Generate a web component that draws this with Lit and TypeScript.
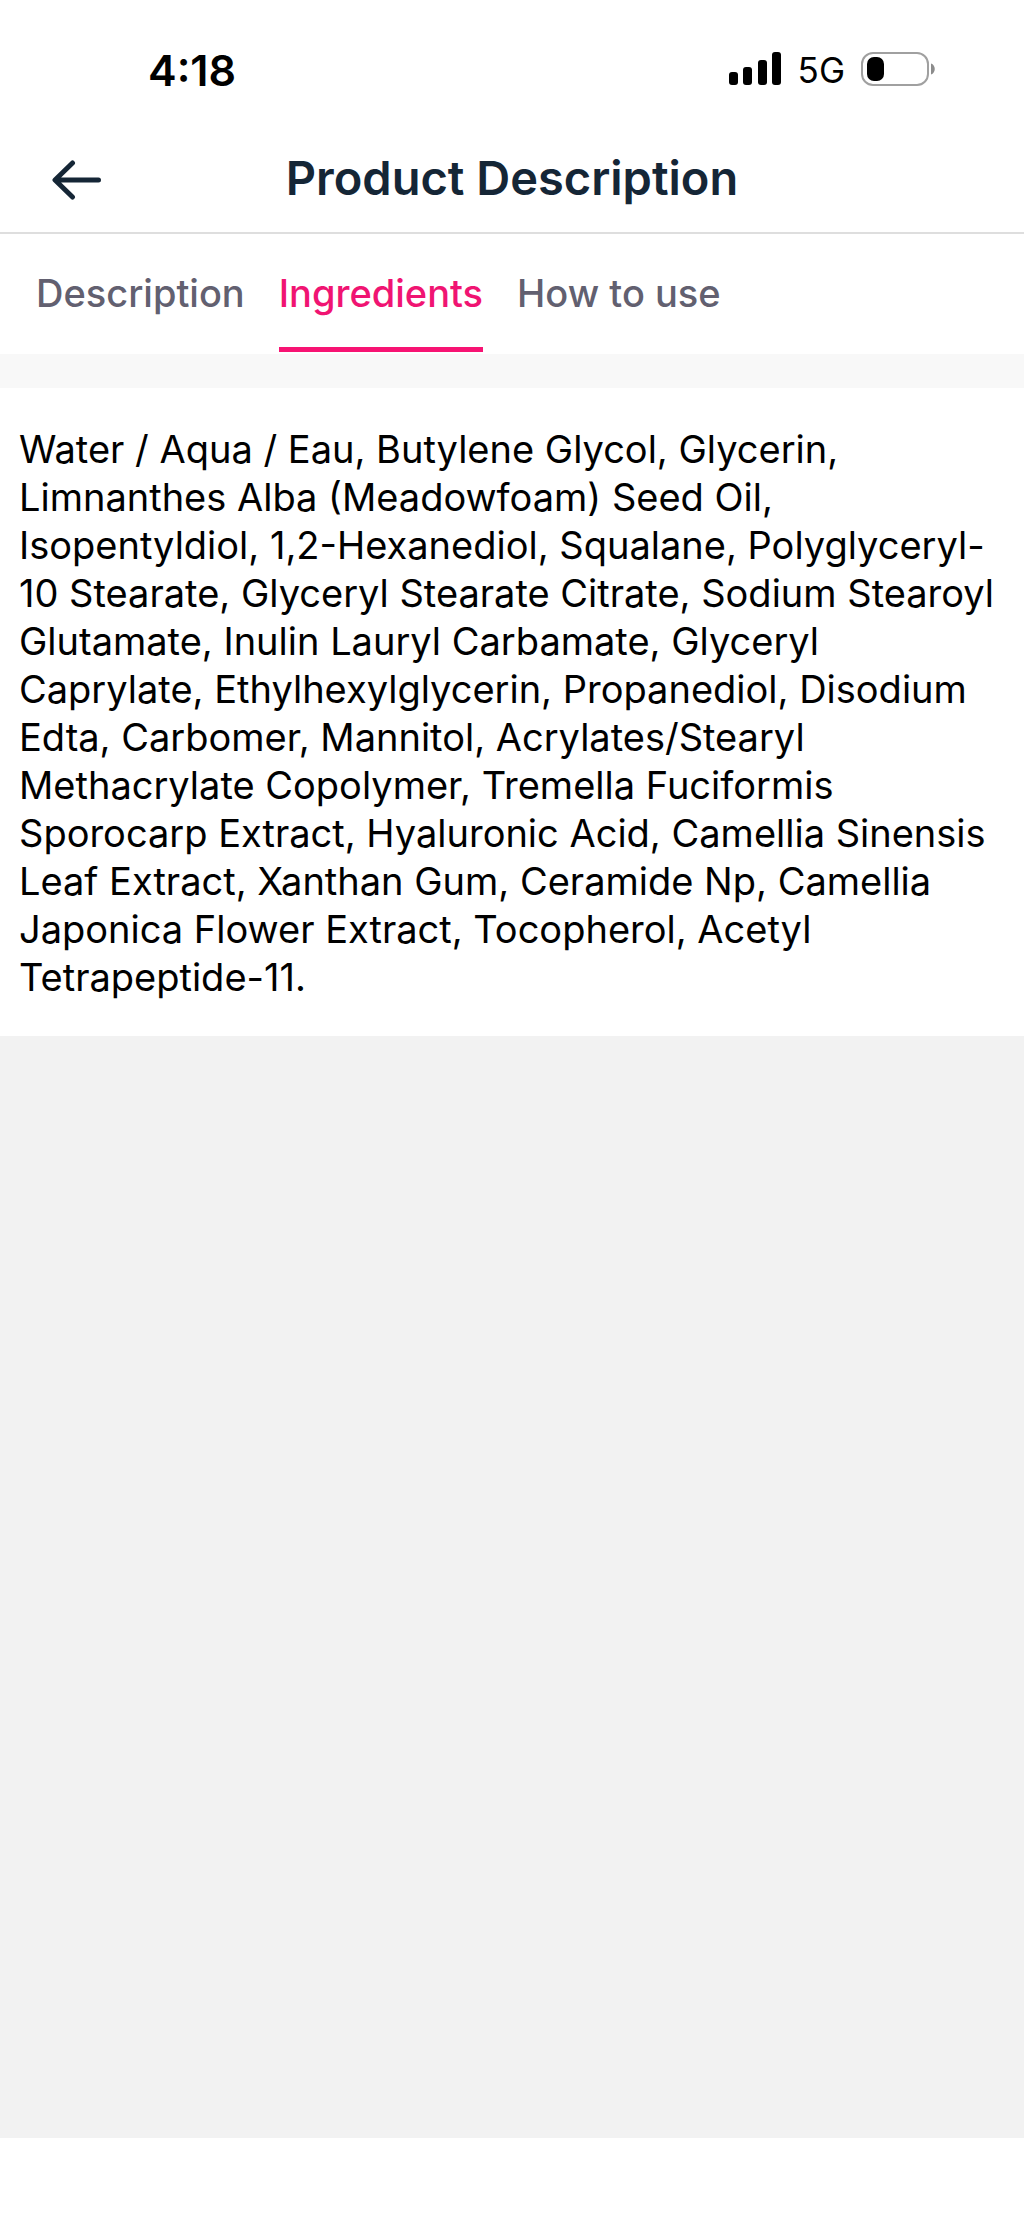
import { LitElement, html, css } from "lit";
import { customElement, state } from "lit/decorators.js";

const TABS = ["Description", "Ingredients", "How to use"];

@customElement("app-root")
export class AppRoot extends LitElement {
  static styles = css`
    :host {
      display: flex;
      flex-direction: column;
      min-height: 100vh;
      background: #f2f2f2;
      color: #000;
      font-family: Inter, "Liberation Sans", sans-serif;
    }
    .status {
      display: flex;
      align-items: center;
      justify-content: space-between;
      box-sizing: border-box;
      height: 124px;
      padding: 16px 87px 0 148px;
      background: #fff;
    }
    .time {
      font-size: 43px;
      font-weight: 600;
      line-height: 48px;
    }
    .indicators {
      display: flex;
      align-items: center;
      gap: 16px;
    }
    .network {
      font-size: 35px;
      font-weight: 400;
      line-height: 40px;
    }
    svg {
      display: block;
    }
    .header {
      display: grid;
      grid-template-columns: 104px 1fr 104px;
      align-items: center;
      height: 108px;
      background: #fff;
      border-bottom: 2px solid #dedede;
    }
    button {
      margin: 0;
      padding: 0;
      border: 0;
      background: none;
      font: inherit;
      color: inherit;
      cursor: pointer;
    }
    .back {
      justify-self: end;
      color: #152636;
    }
    h1 {
      margin: 0;
      font-size: 47px;
      font-weight: 600;
      line-height: 56px;
      text-align: center;
      color: #152636;
    }
    .tabs {
      display: flex;
      gap: 34px;
      padding: 0 36px 2px;
      background: #fff;
    }
    .tab {
      height: 118px;
      border-top: 5px solid transparent;
      border-bottom: 5px solid transparent;
      font-size: 38px;
      font-weight: 500;
      line-height: 48px;
      color: #626070;
    }
    .tab.active {
      color: #f01472;
      border-bottom-color: #f71373;
    }
    .panel {
      padding: 37px 19px 35px;
      background: #fff;
      border-top: 34px solid #f8f8f8;
    }
    p {
      margin: 0;
      font-size: 38px;
      line-height: 48px;
    }
    .safe-area {
      height: 81px;
      margin-top: auto;
      background: #fff;
    }
  `;

  @state() private active = 1;

  render() {
    return html`
      <div class="status">
        <span class="time">4:18</span>
        <div class="indicators">
          <svg width="54" height="36" viewBox="0 0 54 36" role="img" aria-label="Signal">
            <rect x="1" y="20" width="9" height="13" rx="3" />
            <rect x="15" y="15" width="9" height="18" rx="3" />
            <rect x="30" y="8" width="9" height="25" rx="3" />
            <rect x="44" y="0" width="9" height="33" rx="3" />
          </svg>
          <span class="network">5G</span>
          <svg width="76" height="36" viewBox="0 0 76 36" role="img" aria-label="Battery">
            <rect x="1" y="1" width="66" height="32" rx="11" fill="none" stroke="#a0a0a0" stroke-width="2" />
            <rect x="6" y="5" width="17" height="24" rx="7" />
            <path d="M70 11.500c5 1.500 5 9.500 0 11z" fill="#8c8c8c" />
          </svg>
        </div>
      </div>
      <header class="header">
        <button class="back" aria-label="Back">
          <svg width="54" height="44" viewBox="0 0 54 44" fill="none" stroke="currentColor" stroke-width="5" stroke-linecap="round" stroke-linejoin="round">
            <path d="M48.500 24H5.500M22.500 7L5 24L22.500 41" />
          </svg>
        </button>
        <h1>Product Description</h1>
      </header>
      <nav class="tabs" role="tablist">
        ${TABS.map(
          (label, i) => html`<button
            class="tab ${i === this.active ? "active" : ""}"
            role="tab"
            aria-selected=${i === this.active ? "true" : "false"}
            @click=${() => (this.active = i)}
          >${label}</button>`
        )}
      </nav>
      <main class="panel" role="tabpanel">
        <p>
          Water / Aqua / Eau, Butylene Glycol, Glycerin, Limnanthes Alba
          (Meadowfoam) Seed Oil, Isopentyldiol, 1,2-Hexanediol, Squalane,
          Polyglyceryl-10 Stearate, Glyceryl Stearate Citrate, Sodium Stearoyl
          Glutamate, Inulin Lauryl Carbamate, Glyceryl Caprylate,
          Ethylhexylglycerin, Propanediol, Disodium Edta, Carbomer, Mannitol,
          Acrylates/Stearyl Methacrylate Copolymer, Tremella Fuciformis
          Sporocarp Extract, Hyaluronic Acid, Camellia Sinensis Leaf Extract,
          Xanthan Gum, Ceramide Np, Camellia Japonica Flower Extract,
          Tocopherol, Acetyl Tetrapeptide-11.
        </p>
      </main>
      <div class="safe-area"></div>
    `;
  }
}
